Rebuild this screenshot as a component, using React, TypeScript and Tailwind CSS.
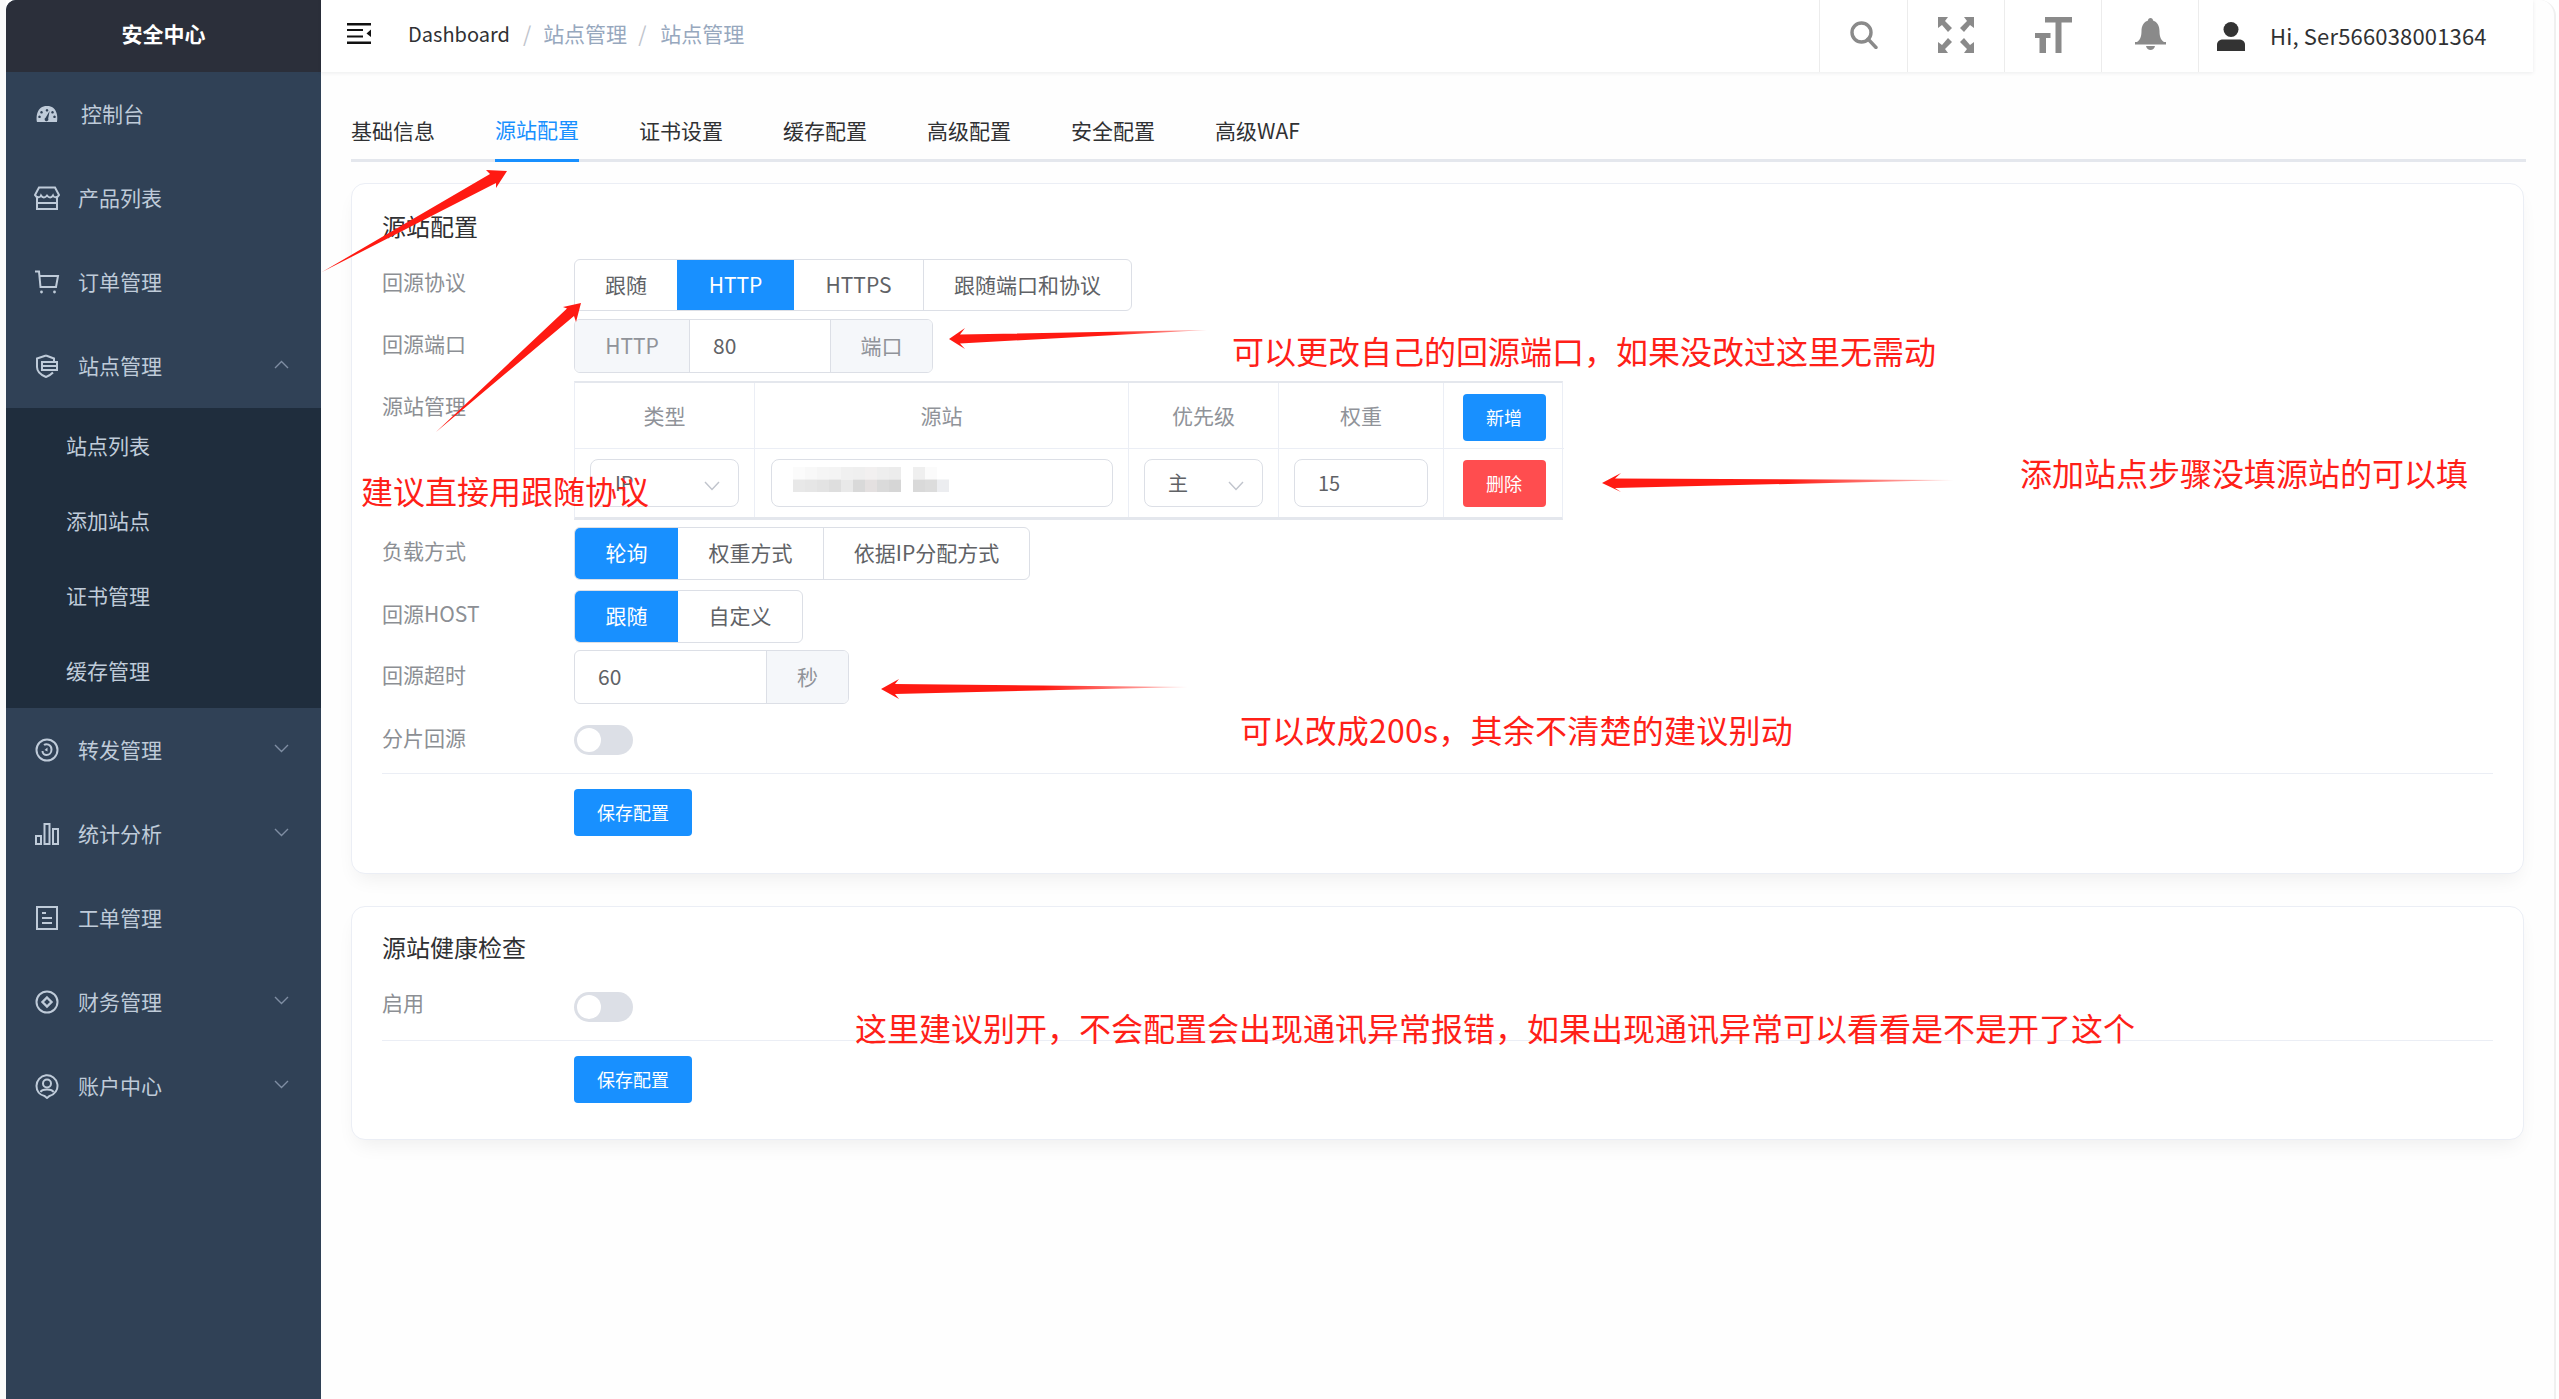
import type { ReactNode } from "react"

const Chevron = ({ up }: { up?: boolean }) => (
    <svg width="15" height="9" viewBox="0 0 15 9" fill="none" stroke="#7f8ea3" strokeWidth="1.4" className="absolute left-[268px] top-1/2 -translate-y-[6px]">
        <path d={up ? "M1 8 L7.5 1.5 L14 8" : "M1 1 L7.5 7.5 L14 1"} />
    </svg>
)

const ic = "#bfcbd9"

const icons: Record<string, ReactNode> = {
    gauge: (
        <svg width="24" height="24" viewBox="0 0 24 24">
            <path fill={ic} fillRule="evenodd" d="M2 20 C1 15 1.5 4 12 4 C22.5 4 23 15 22 20 Z M12 7 a1.3 1.3 0 1 0 .01 0 Z M6.5 9 a1.3 1.3 0 1 0 .01 0 Z M17.5 9 a1.3 1.3 0 1 0 .01 0 Z M4.5 13.5 a1.3 1.3 0 1 0 .01 0 Z M19.5 13.5 a1.3 1.3 0 1 0 .01 0 Z" />
            <path fill="#304156" d="M14.6 9 L13.2 16.5 a1.9 1.9 0 1 1 -2.6 -.8 Z" />
        </svg>
    ),
    store: (
        <svg width="26" height="24" viewBox="0 0 26 24" fill="none" stroke={ic} strokeWidth="2">
            <path d="M5 1.5 H21 L25 9 C23.5 12 20 12 19 9.5 C17.5 12 15 12 13 9.5 C11 12 8.500 12 7 9.500 C6 12 2.500 12 1 9 Z" />
            <path d="M3 11 V23 H23 V11 M3 17 H23" />
        </svg>
    ),
    cart: (
        <svg width="26" height="24" viewBox="0 0 26 24" fill="none" stroke={ic} strokeWidth="2">
            <path d="M1 1.500 H5 L6.500 17 H22 L24 6 H6" />
            <circle cx="7.500" cy="22" r="1.400" fill={ic} stroke="none" />
            <circle cx="20.500" cy="22" r="1.400" fill={ic} stroke="none" />
        </svg>
    ),
    shield: (
        <svg width="24" height="24" viewBox="0 0 24 24" fill="none" stroke={ic} strokeWidth="2">
            <path d="M11 1.500 L2 4.500 V13 C2 18 6 21 11 23 C14 22 16 20.500 18 18.500" />
            <path d="M7 8 H22 V16 H7 Z M7 12 H22" />
            <path d="M11 1.500 L19 4.500 V7" />
        </svg>
    ),
    forward: (
        <svg width="24" height="24" viewBox="0 0 24 24" fill="none" stroke={ic} strokeWidth="2">
            <circle cx="12" cy="12" r="10.500" />
            <path d="M9 7 C11 5.500 16.500 6 16.500 11.500 C16.500 15 14 17 11.500 17 C9.500 17 7.500 15.500 7.500 13" />
            <path d="M9.500 12 L12.500 9.500 V13.500 Z" fill={ic} stroke="none" />
        </svg>
    ),
    bars: (
        <svg width="24" height="22" viewBox="0 0 24 22" fill="none" stroke={ic} strokeWidth="2">
            <path d="M1 13 H6 V21 H1 Z M9.500 1 H14.500 V21 H9.500 Z M18 6 H23 V21 H18 Z" />
        </svg>
    ),
    doc: (
        <svg width="22" height="24" viewBox="0 0 22 24" fill="none" stroke={ic} strokeWidth="2">
            <path d="M1 1 H21 V23 H1 Z" />
            <path d="M6 7 H10 M6 12 H16 M6 17 H16" />
        </svg>
    ),
    finance: (
        <svg width="24" height="24" viewBox="0 0 24 24" fill="none" stroke={ic} strokeWidth="2">
            <circle cx="12" cy="12" r="10.500" />
            <path d="M12 7.500 L16.500 12 L12 16.500 L7.500 12 Z" strokeWidth="2.400" />
        </svg>
    ),
    account: (
        <svg width="24" height="25" viewBox="0 0 24 25" fill="none" stroke={ic} strokeWidth="2">
            <path d="M9.500 22 C4.500 21 1.500 17 1.500 12 A10.500 10.500 0 1 1 14.500 22 L12 24 Z" />
            <circle cx="12" cy="9.500" r="4" />
            <path d="M5.500 18 C7 14.500 17 14.500 18.500 18" />
        </svg>
    ),
}

const MenuItem = ({ icon, label, chevron, labelClass }: { icon: string; label: string; chevron?: "up" | "down"; labelClass?: string }) => (
    <div className="relative flex h-[84px] items-center pl-[28px]">
        <div className="flex w-[26px] justify-center">{icons[icon]}</div>
        <span className={`text-[21px] text-[#bfcbd9] ${labelClass ?? "ml-[18px]"}`}>{label}</span>
        {chevron && <Chevron up={chevron === "up"} />}
    </div>
)

const Segments = ({ items }: { items: { label: string; width: string; active?: boolean }[] }) => (
    <div className="flex h-full overflow-hidden rounded-[6px] border border-[#dcdfe6]">
        {items.map((it, i) => (
            <div
                key={it.label}
                className={`flex items-center justify-center pb-[1px] text-[21px] ${it.width} ${it.active ? "-my-px bg-[#1890ff] text-white" : "text-[#606266]"} ${i > 0 && !items[i - 1].active && !it.active ? "border-l border-[#dcdfe6]" : ""}`}
            >
                {it.label}
            </div>
        ))}
    </div>
)

const FormLabel = ({ children, className }: { children: ReactNode; className: string }) => (
    <div className={`w-[192px] shrink-0 text-[21px] leading-[30px] text-[#8c8f94] ${className}`}>{children}</div>
)

const Switch = () => (
    <div className="flex h-[30px] w-[59px] items-center rounded-full bg-[#dcdfe6] pl-[3px]">
        <div className="h-[24px] w-[24px] rounded-full bg-white" />
    </div>
)

const SaveButton = () => (
    <button className="flex h-[47px] w-[118px] items-center justify-center rounded-[4px] bg-[#1890ff] text-[18px] text-white">保存配置</button>
)

const SelectBox = ({ text, className }: { text: string; className: string }) => (
    <div className={`relative flex h-[48px] items-center rounded-[8px] border border-[#dcdfe6] text-[20px] text-[#606266] ${className}`}>
        {text}
        <svg width="16" height="10" viewBox="0 0 16 10" fill="none" stroke="#c0c4cc" strokeWidth="1.400" className="absolute right-[18px] top-[21px]">
            <path d="M1 1 L8 8.500 L15 1" />
        </svg>
    </div>
)

const HeadCell = ({ children, last }: { children: ReactNode; last?: boolean }) => (
    <div className={`flex h-[66px] items-center justify-center border-b border-[#ebeef5] text-[21px] text-[#909399] ${last ? "pt-[3px]" : "border-r"}`}>{children}</div>
)

const BodyCell = ({ children, last, className }: { children: ReactNode; last?: boolean; className?: string }) => (
    <div className={`flex h-[68px] items-center justify-center border-[#ebeef5] ${last ? "" : "border-r"} ${className ?? ""}`}>{children}</div>
)

// pixelated part of the screenshot, hides the origin address
const mosaic = [
    ["#fbfbfb", "#f8f8f8", "#f5f5f5", "#f4f4f4", "#f0f0f0", "#efefef", "#f2f0f0", "#eeeeee", "#ececec", "#ffffff", "#efefef", "#fbfbfb", "#ffffff"],
    ["#e8e8e8", "#e6e6e6", "#e3e3e3", "#dedede", "#e9e9e9", "#d9d9d9", "#e4e0e0", "#dadada", "#d6d6d6", "#ffffff", "#d9d9d9", "#dcdcdc", "#ecedf0"],
]

const Mosaic = () => (
    <svg width="156" height="25" viewBox="0 0 156 25" className="mb-[7px]">
        {mosaic.map((row, y) => row.map((c, x) => <rect key={`${x}-${y}`} x={x * 12} y={y * 12.500} width="12" height="12.500" fill={c} />))}
    </svg>
)

const notes = [
    { text: "可以更改自己的回源端口，如果没改过这里无需动", cls: "left-[1232px] top-[325px]" },
    { text: "添加站点步骤没填源站的可以填", cls: "left-[2020px] top-[447px]" },
    { text: "建议直接用跟随协议", cls: "left-[361px] top-[465px]" },
    { text: "可以改成200s，其余不清楚的建议别动", cls: "left-[1240px] top-[704px] tracking-[0.25px]" },
    { text: "这里建议别开，不会配置会出现通讯异常报错，如果出现通讯异常可以看看是不是开了这个", cls: "left-[855px] top-[1002px]" },
]

export default function App() {
    return (
        <div className="relative flex h-[1399px] w-[2559px] overflow-hidden bg-white font-['Noto_Sans_CJK_SC','Noto_Sans',sans-serif]">
            <div className="w-[6px] shrink-0 bg-[#fafafa]" />

            {/* Sidebar */}
            <aside className="w-[315px] shrink-0 overflow-hidden rounded-tl-[10px] bg-[#304156]">
                <div className="flex h-[72px] items-center justify-center bg-[#2b2f3a] pb-[5px] text-[21px] font-bold text-white">安全中心</div>
                <MenuItem icon="gauge" label="控制台" labelClass="ml-[21px]" />
                <MenuItem icon="store" label="产品列表" />
                <MenuItem icon="cart" label="订单管理" />
                <MenuItem icon="shield" label="站点管理" chevron="up" />
                <div className="bg-[#1f2d3d]">
                    {["站点列表", "添加站点", "证书管理", "缓存管理"].map((t) => (
                        <div key={t} className="flex h-[75px] items-center pl-[60px] text-[21px] text-[#bfcbd9]">{t}</div>
                    ))}
                </div>
                <MenuItem icon="forward" label="转发管理" chevron="down" />
                <MenuItem icon="bars" label="统计分析" chevron="down" />
                <MenuItem icon="doc" label="工单管理" />
                <MenuItem icon="finance" label="财务管理" chevron="down" />
                <MenuItem icon="account" label="账户中心" chevron="down" />
            </aside>

            {/* Main */}
            <main className="h-full w-[2235px] shrink-0 rounded-tr-[16px] border-r-[2px] border-[#f0f0f0] bg-[#fefefe]">
                <header className="relative z-10 flex h-[72px] w-[2212px] items-center bg-white pl-[26px] shadow-[0_1px_4px_rgba(0,21,41,0.08)]">
                    <svg width="24" height="21" viewBox="0 0 24 21" fill="#111" className="mb-[5px]">
                        <path d="M0 0 H24 V2.500 H0 Z M0 18.500 H24 V21 H0 Z M0 6 H16 V8 H0 Z M0 12.500 H16 V14.500 H0 Z M24 6.500 V14 L19.500 10.500 Z" />
                    </svg>
                    <span className="mb-[4px] ml-[37px] text-[20px] text-[#303133]">Dashboard</span>
                    <span className="mb-[4px] ml-[13px] text-[21px] text-[#c0c4cc]">/</span>
                    <span className="mb-[4px] ml-[12px] text-[21px] text-[#97a8be]">站点管理</span>
                    <span className="mb-[4px] ml-[11px] text-[21px] text-[#c0c4cc]">/</span>
                    <span className="mb-[4px] ml-[14px] text-[21px] text-[#97a8be]">站点管理</span>

                    <div className="ml-auto flex h-full items-stretch">
                        <div className="flex w-[88px] items-center justify-center border-l border-[#ececec] pb-[3px]">
                            <svg width="28" height="28" viewBox="0 0 28 28" fill="none" stroke="#8a8a8a" strokeWidth="3.400">
                                <circle cx="11.500" cy="11.500" r="9.500" />
                                <path d="M18 18 L26 26.500" strokeLinecap="round" />
                            </svg>
                        </div>
                        <div className="flex w-[97px] items-center justify-center border-l border-[#ececec] pb-[3px]">
                            <svg width="36" height="36" viewBox="0 0 36 36" fill="#8a8a8a">
                                <path d="M0 0 H10 L7 4 L14 11 L10 15 L4 8 L0 11 Z M36 0 H26 L29 4 L22 11 L26 15 L32 8 L36 11 Z M0 36 H10 L7 32 L14 25 L10 21 L4 28 L0 25 Z M36 36 H26 L29 32 L22 25 L26 21 L32 28 L36 25 Z" />
                            </svg>
                        </div>
                        <div className="flex w-[97px] items-center justify-center border-l border-[#ececec] pb-[3px]">
                            <svg width="37" height="36" viewBox="0 0 37 36" fill="#8a8a8a">
                                <path d="M10 0 H37 V5.500 H26.500 V36 H20.500 V5.500 H10 Z M0 16 H15.500 V21 H11 V36 H4.500 V21 H0 Z" />
                            </svg>
                        </div>
                        <div className="flex w-[97px] items-center justify-center border-l border-[#ececec] pb-[4px]">
                            <svg width="31" height="32" viewBox="0 0 31 32" fill="#8a8a8a">
                                <path d="M15.500 0 C17 0 18 1 18 2.500 C22.500 4 24.500 8 24.500 13 C24.500 19 26 22 29 24 H31 V26.500 H0 V24 H2 C5 22 6.500 19 6.500 13 C6.500 8 8.500 4 13 2.500 C13 1 14 0 15.500 0 Z" />
                                <path d="M11 28 H20 C19.500 30.500 17.500 32 15.500 32 C13.500 32 11.500 30.500 11 28 Z" />
                            </svg>
                        </div>
                        <div className="flex w-[335px] items-center border-l border-[#ececec] pl-[18px]">
                            <svg width="28" height="29" viewBox="0 0 28 29" fill="#333">
                                <ellipse cx="14" cy="7.500" rx="7.500" ry="7.500" />
                                <path d="M0 29 V23 C0 19 3 17.500 6 17.500 H22 C25 17.500 28 19 28 23 V29 Z" />
                            </svg>
                            <span className="mb-[1px] ml-[25px] text-[22px] tracking-[0.17px] text-[#303133]">Hi, Ser566038001364</span>
                        </div>
                    </div>
                </header>

                <div className="w-[2205px] pl-[30px]">
                    {/* Tabs */}
                    <div className="mt-[30px] flex h-[60px] w-[2175px] gap-[60px] border-b-[3px] border-[#e4e7ed]">
                        {["基础信息", "源站配置", "证书设置", "缓存配置", "高级配置", "安全配置", "高级WAF"].map((t) => (
                            <div
                                key={t}
                                className={`flex h-[60px] items-center pb-[2px] text-[21px] ${t === "源站配置" ? "border-b-[3px] border-[#1890ff] text-[#1890ff]" : "text-[#303133]"}`}
                            >
                                {t}
                            </div>
                        ))}
                    </div>

                    {/* 源站配置 */}
                    <section className="mt-[21px] h-[691px] w-[2173px] rounded-[14px] border border-[#ebeef5] bg-white px-[30px] pt-[24px] shadow-[0_10px_20px_-6px_rgba(0,0,0,0.07)]">
                        <h3 className="h-[36px] text-[24px] leading-[36px] text-[#303133]">源站配置</h3>

                        <div className="mt-[15px] flex h-[52px]">
                            <FormLabel className="pt-[7px]">回源协议</FormLabel>
                            <Segments
                                items={[
                                    { label: "跟随", width: "w-[102px]" },
                                    { label: "HTTP", width: "w-[117px]", active: true },
                                    { label: "HTTPS", width: "w-[129px]" },
                                    { label: "跟随端口和协议", width: "w-[208px]" },
                                ]}
                            />
                        </div>

                        <div className="mt-[8px] flex h-[54px]">
                            <FormLabel className="pt-[9px]">回源端口</FormLabel>
                            <div className="flex w-[359px] overflow-hidden rounded-[6px] border border-[#dcdfe6] text-[21px]">
                                <div className="flex w-[115px] items-center justify-center border-r border-[#dcdfe6] bg-[#f5f7fa] pb-[1px] text-[#909399]">HTTP</div>
                                <div className="flex w-[140px] items-center pl-[23px] text-[#606266]">80</div>
                                <div className="flex flex-1 items-center justify-center border-l border-[#dcdfe6] bg-[#f5f7fa] text-[#909399]">端口</div>
                            </div>
                        </div>

                        <div className="mt-[8px] flex">
                            <FormLabel className="pt-[9px]">源站管理</FormLabel>
                            <div className="grid w-[989px] grid-cols-[180px_374px_150px_165px_120px] border-x border-t-[2px] border-b-[3px] border-[#ebeef5] border-t-[#e4e7ed] border-b-[#e4e7ed]">
                                <HeadCell>类型</HeadCell>
                                <HeadCell>源站</HeadCell>
                                <HeadCell>优先级</HeadCell>
                                <HeadCell>权重</HeadCell>
                                <HeadCell last>
                                    <button className="flex h-[47px] w-[83px] items-center justify-center rounded-[4px] bg-[#1890ff] text-[18px] text-white">新增</button>
                                </HeadCell>
                                <BodyCell>
                                    <SelectBox text="IP" className="w-[149px] pl-[24px]" />
                                </BodyCell>
                                <BodyCell>
                                    <div className="flex h-[48px] w-[342px] items-center rounded-[8px] border border-[#dcdfe6] pl-[21px]">
                                        <Mosaic />
                                    </div>
                                </BodyCell>
                                <BodyCell>
                                    <SelectBox text="主" className="w-[119px] pl-[23px]" />
                                </BodyCell>
                                <BodyCell>
                                    <div className="flex h-[48px] w-[134px] items-center rounded-[8px] border border-[#dcdfe6] pl-[23px] text-[20px] text-[#606266]">15</div>
                                </BodyCell>
                                <BodyCell last>
                                    <button className="flex h-[47px] w-[83px] items-center justify-center rounded-[4px] bg-[#ff4d4f] text-[18px] text-white">删除</button>
                                </BodyCell>
                            </div>
                        </div>

                        <div className="mt-[7px] flex h-[53px]">
                            <FormLabel className="pt-[8px]">负载方式</FormLabel>
                            <Segments
                                items={[
                                    { label: "轮询", width: "w-[103px]", active: true },
                                    { label: "权重方式", width: "w-[145px]" },
                                    { label: "依据IP分配方式", width: "w-[206px]" },
                                ]}
                            />
                        </div>

                        <div className="mt-[10px] flex h-[53px]">
                            <FormLabel className="pt-[8px]">回源HOST</FormLabel>
                            <Segments
                                items={[
                                    { label: "跟随", width: "w-[103px]", active: true },
                                    { label: "自定义", width: "w-[124px]" },
                                ]}
                            />
                        </div>

                        <div className="mt-[7px] flex h-[54px]">
                            <FormLabel className="pt-[9px]">回源超时</FormLabel>
                            <div className="flex w-[275px] overflow-hidden rounded-[6px] border border-[#dcdfe6] text-[21px]">
                                <div className="flex w-[191px] items-center pl-[23px] text-[#606266]">60</div>
                                <div className="flex flex-1 items-center justify-center border-l border-[#dcdfe6] bg-[#f5f7fa] text-[#909399]">秒</div>
                            </div>
                        </div>

                        <div className="mt-[21px] flex h-[30px] items-center">
                            <FormLabel className="pb-[7px]">分片回源</FormLabel>
                            <Switch />
                        </div>

                        <div className="mt-[18px] border-t border-[#ebeef5] pl-[192px] pt-[15px]">
                            <SaveButton />
                        </div>
                    </section>

                    {/* 源站健康检查 */}
                    <section className="mt-[32px] h-[234px] w-[2173px] rounded-[14px] border border-[#ebeef5] bg-white px-[30px] pt-[22px] shadow-[0_10px_20px_-6px_rgba(0,0,0,0.07)]">
                        <h3 className="h-[36px] text-[24px] leading-[36px] text-[#303133]">源站健康检查</h3>
                        <div className="mt-[27px] flex h-[30px] items-center">
                            <FormLabel className="pb-[10px]">启用</FormLabel>
                            <Switch />
                        </div>
                        <div className="mt-[18px] border-t border-[#ebeef5] pl-[192px] pt-[15px]">
                            <SaveButton />
                        </div>
                    </section>
                </div>
            </main>

            {/* Red annotations drawn on top of the screenshot */}
            <svg className="pointer-events-none absolute left-0 top-0 z-20" width="2559" height="1399" viewBox="0 0 2559 1399">
                <defs>
                    <linearGradient id="fadeA" gradientUnits="userSpaceOnUse" x1="965" y1="0" x2="1207" y2="0">
                        <stop offset="0.6" stopColor="#ff1a12" />
                        <stop offset="1" stopColor="#ff1a12" stopOpacity="0.3" />
                    </linearGradient>
                    <linearGradient id="fadeB" gradientUnits="userSpaceOnUse" x1="1621" y1="0" x2="1954" y2="0">
                        <stop offset="0.5" stopColor="#ff1a12" />
                        <stop offset="1" stopColor="#ff1a12" stopOpacity="0.2" />
                    </linearGradient>
                    <linearGradient id="fadeC" gradientUnits="userSpaceOnUse" x1="899" y1="0" x2="1188" y2="0">
                        <stop offset="0.5" stopColor="#ff1a12" />
                        <stop offset="1" stopColor="#ff1a12" stopOpacity="0.2" />
                    </linearGradient>
                </defs>
                <polygon fill="#ff1a12" points="322,272 490,174 486,170 507,171 496,188 496,183" />
                <polygon fill="#ff1a12" points="436,432 567,308.500 563,307 581,303 576,322 574,316" />
                <polygon fill="url(#fadeA)" points="1207,330 960,334.500 965,328 949,339 965,349 960,343.500" />
                <polygon fill="url(#fadeB)" points="1954,480 1615,478.500 1621,473 1602,483 1621,492 1615,488" />
                <polygon fill="url(#fadeC)" points="1188,687 895,684 899,679 881,689 899,699 895,694" />
            </svg>
            {notes.map((n) => (
                <div key={n.text} className={`absolute z-30 whitespace-nowrap text-[32px] leading-[50px] text-[#ff2018] ${n.cls}`}>
                    {n.text}
                </div>
            ))}
        </div>
    )
}
